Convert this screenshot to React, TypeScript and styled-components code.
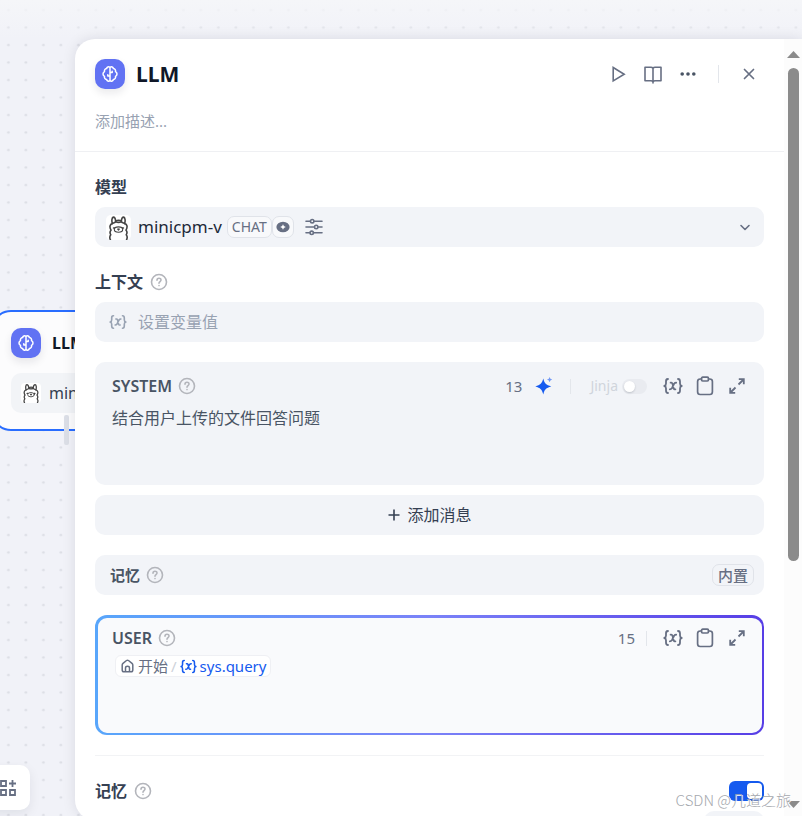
import React from "react";
import styled, { createGlobalStyle, css } from "styled-components";

const Global = createGlobalStyle`
  *, *::before, *::after { box-sizing: border-box; }
  body {
    margin: 0;
    overflow: hidden;
    font-family: "Noto Sans", "Noto Sans CJK SC", sans-serif;
    font-size: 16px;
    line-height: 24px;
    color: #354052;
  }
  button, input, textarea { font: inherit; color: inherit; }
  button { border: 0; padding: 0; background: none; cursor: pointer; }
  svg { display: block; flex: none; }
  h1, h2, h3, p { margin: 0; font: inherit; }
`;

const Shell = styled.div`
  position: relative;
  display: flex;
  height: 100vh;
  padding: 39px 0 0 75px;
  overflow: hidden;
  background-color: #f1f2f8;
`;

const Dots = styled.svg`
  position: absolute;
  inset: 0;
  width: 100%;
  height: 100%;
`;

const TopFade = styled.div`
  position: absolute;
  inset: 0 0 auto;
  height: 39px;
  background: linear-gradient(#f5f6f9, #f5f6f900);
`;

const NodeLayer = styled.div`
  position: absolute;
  left: 0;
  top: 0;
  bottom: 0;
  width: 75px;
  overflow: hidden;
`;

const Node = styled.article`
  position: absolute;
  left: -9px;
  top: 310px;
  width: 280px;
  height: 121px;
  padding: 16px 18px;
  border: 2px solid #296dff;
  border-radius: 20px;
  background: #fcfcfd;
`;

const NodeHead = styled.div`
  display: flex;
  align-items: center;
  gap: 11px;
  color: #101828;
  font-weight: 700;
`;

const NodeModel = styled.div`
  display: flex;
  align-items: center;
  gap: 8px;
  height: 40px;
  margin-top: 15px;
  padding: 0 10px;
  border-radius: 10px;
  background: #f2f4f7;
`;

const NodeHandle = styled.i`
  position: absolute;
  left: 64px;
  top: 415px;
  width: 5px;
  height: 30px;
  border-radius: 2px;
  background: #dcdfe7;
`;

const BlocksButton = styled.button`
  position: absolute;
  left: -15px;
  top: 765px;
  display: flex;
  align-items: center;
  justify-content: center;
  width: 45px;
  height: 45px;
  border-radius: 10px;
  background: #fff;
  color: #676f83;
  box-shadow: 0 4px 12px #10182814;
`;

const Panel = styled.section`
  position: relative;
  display: flex;
  flex: 1;
  min-width: 0;
  margin-bottom: -4px;
  overflow: hidden;
  border-radius: 20px 0 0 20px;
  background: #fff;
  box-shadow: 0 0 14px #1018281a;
`;

const PanelMain = styled.div`
  flex: 1;
  min-width: 0;
`;

const Header = styled.header`
  padding: 20px 20px 18px;
  border-bottom: 1px solid #eff0f3;
`;

const HeaderRow = styled.div`
  display: flex;
  align-items: center;
  height: 30px;
`;

const Title = styled.h1`
  flex: 1;
  margin-left: 11px;
  color: #101828;
  font-size: 21px;
  font-weight: 700;
`;

const BrainTile = styled.span`
  display: flex;
  align-items: center;
  justify-content: center;
  width: 30px;
  height: 30px;
  border-radius: 10px;
  background: #6172f3;
  color: #fff;
  box-shadow: 0 4px 8px #10182818;
`;

const Tools = styled.div<{ $gap: number }>`
  display: flex;
  align-items: center;
  gap: ${(p) => p.$gap}px;
`;

const CountGroup = styled(Tools)`
  margin-right: 16px;
`;

const CloseGroup = styled.div`
  display: flex;
  align-items: center;
  gap: 20px;
  margin: 0 5px;
`;

const JinjaGroup = styled.div`
  display: flex;
  align-items: center;
  gap: 19px;
  margin-left: 4px;
`;

const IconButton = styled.button`
  display: flex;
  align-items: center;
  justify-content: center;
  width: 20px;
  height: 24px;
  color: #676f83;
`;

const Rule = styled.i<{ $tall?: boolean }>`
  width: 1px;
  height: ${(p) => (p.$tall ? 18 : 15)}px;
  background: #e3e6eb;
`;

const Description = styled.input`
  display: block;
  width: 100%;
  height: 24px;
  margin-top: 20px;
  padding: 0;
  border: 0;
  outline: 0;
  background: none;
  font-size: 15px;
  &::placeholder { color: #98a2b2; opacity: 1; }
`;

const Body = styled.div`
  padding: 23px 20px 0;
`;

const Label = styled.h2`
  display: flex;
  align-items: center;
  gap: 7px;
  height: 24px;
  margin-bottom: 8px;
  color: #354052;
  font-weight: 600;
`;

const bar = css`
  display: flex;
  align-items: center;
  width: 100%;
  height: 40px;
  border-radius: 10px;
  background: #f2f4f8;
`;

const ModelSelect = styled.div`
  ${bar}
  margin-bottom: 23px;
  padding: 0 9px 0 11px;
`;

const ModelName = styled.span`
  margin: 0 5px 0 7px;
  color: #1d2939;
  font-size: 17px;
`;

const Badge = styled.span`
  display: flex;
  align-items: center;
  height: 22px;
  padding: 0 4px;
  border: 1px solid #e0e3e9;
  border-radius: 7px;
  background: #f8f9fb;
  color: #676f83;
  font-size: 14px;
`;

const Vision = styled(Badge)`
  margin-right: 10px;
  padding: 0 3px;
`;

const BuiltIn = styled(Badge)`
  padding: 0 5px;
  background: none;
  font-size: 15px;
  font-weight: 500;
`;

const Spacer = styled.span`
  flex: 1;
`;

const ContextPicker = styled.button`
  ${bar}
  gap: 11px;
  padding: 0 14px;
  color: #98a2b2;
`;

const Prompt = styled.section`
  height: 123px;
  margin: 20px 0 10px;
  padding: 12px 17px;
  border-radius: 10px;
  background: #f2f4f8;
`;

const UserPrompt = styled.section`
  height: 120px;
  margin: 20px 0;
  padding: 8px 15px 12px 14px;
  border: solid transparent;
  border-width: 3px 2px 2px 3px;
  border-radius: 12px;
  background:
    linear-gradient(#f9fafc, #f9fafc) padding-box,
    linear-gradient(90deg, #58a6fb, #7a82f8 50%, #573ee6) border-box;
`;

const PromptHead = styled.div`
  display: flex;
  align-items: center;
  height: 24px;
`;

const PromptTitle = styled.h3`
  display: flex;
  flex: 1;
  align-items: center;
  gap: 6px;
  color: #495464;
  font-size: 16px;
  font-weight: 600;
`;

const MemoryTitle = styled(PromptTitle)`
  font-size: 15px;
`;

const Count = styled.span`
  color: #676f83;
  font-size: 15px;
`;

const Jinja = styled.label`
  display: flex;
  align-items: center;
  gap: 4px;
  color: #d0d5dc;
  font-size: 14px;
`;

const Toggle = styled.input<{ $large?: boolean }>`
  appearance: none;
  display: flex;
  width: ${(p) => (p.$large ? 35 : 25)}px;
  height: ${(p) => (p.$large ? 20 : 15)}px;
  margin: 0;
  padding: 2px;
  border-radius: ${(p) => (p.$large ? 6 : 8)}px;
  background: #e9ebf0;
  cursor: pointer;
  &::before {
    content: "";
    width: ${(p) => (p.$large ? 15 : 11)}px;
    border-radius: ${(p) => (p.$large ? 4 : 6)}px;
    background: #fff;
    box-shadow: 0 1px 2px #10182830;
  }
  &:checked { justify-content: flex-end; background: #155aef; }
`;

const PromptText = styled.textarea`
  display: block;
  width: 100%;
  height: 72px;
  margin-top: 8px;
  padding: 0;
  border: 0;
  outline: 0;
  resize: none;
  background: none;
  color: #495464;
`;

const AddButton = styled.button`
  ${bar}
  justify-content: center;
  gap: 6px;
  color: #354052;
`;

const MemoryBar = styled.div`
  ${bar}
  margin-top: 20px;
  padding: 0 10px 0 15px;
`;

const VariableTag = styled.span`
  display: inline-flex;
  align-items: center;
  height: 22px;
  margin: 5px 0 0 3px;
  padding: 0 4px 0 5px;
  border: 1px solid #eff0f4;
  border-radius: 6px;
  background: #fff;
  color: #676f83;
  font-size: 15px;
`;

const StartName = styled.span`
  margin-left: 4px;
`;

const Slash = styled.span`
  margin: 0 3px;
  color: #cdd2da;
`;

const VariableName = styled.span`
  display: flex;
  align-items: center;
  gap: 3px;
  color: #155aef;
`;

const MemorySection = styled.div`
  display: flex;
  justify-content: space-between;
  padding-top: 23px;
  border-top: 1px solid #f2f3f5;
`;

const SwitchSlot = styled.div`
  display: flex;
  align-items: center;
  height: 24px;
`;

const WindowSize = styled.div`
  width: 60px;
  height: 30px;
  margin-left: auto;
  border-radius: 10px;
  background: #f2f4f8;
`;

const ScrollTrack = styled.div`
  display: flex;
  flex-direction: column;
  align-items: center;
  width: 18px;
  padding: 12px 0 12px;
  background: #fcfcfc;
  color: #8b8b8b;
`;

const ScrollThumb = styled.div`
  flex: 0 1 493px;
  width: 11px;
  margin: 10px 0 auto;
  border-radius: 6px;
  background: #8b8b8b;
`;

const Watermark = styled.span`
  position: absolute;
  right: 11px;
  bottom: 4px;
  color: #a5a8ae;
  font-size: 15px;
  font-weight: 300;
  font-family: "Noto Sans CJK SC", sans-serif;
  text-shadow: 1px 1px 0 #fff;
  white-space: pre;
`;

type IconProps = { size?: number };

const stroke = {
  fill: "none",
  stroke: "currentColor",
  strokeLinecap: "round",
  strokeLinejoin: "round",
} as const;

const Brain = () => (
  <svg width="18" height="18" viewBox="0 0 18 18" {...stroke} strokeWidth="1.5">
    <path d="M9 2.4C7.7 1.3 5.8 2 5.6 3.6C4 3.8 3.1 5.2 3.5 6.7C1.5 7.7 1.5 10.3 3.5 11.3C3.1 12.8 4 14.2 5.6 14.4C5.8 16 7.7 16.7 9 15.6M9 2.4C10.3 1.3 12.2 2 12.4 3.6C14 3.8 14.9 5.2 14.5 6.7C16.5 7.7 16.5 10.3 14.5 11.3C14.9 12.8 14 14.2 12.4 14.4C12.2 16 10.3 16.7 9 15.6M9 2.4V15.6M9 7.4H11.2V6.2M9 11H6.8V9.8" />
  </svg>
);

const Llama = ({ size = 25 }: IconProps) => (
  <svg width={size} height={size} viewBox="0 0 25 25" aria-hidden="true">
    <rect width="25" height="25" rx="5" fill="#fff" />
    <g {...stroke} stroke="#444" strokeWidth="1.6">
      <path d="M4.5 25C3.3 22.7 3.5 21.3 4.8 19.8C3.7 18 3.8 16.5 5 15.2C3.2 12 3.8 9.4 6.4 8.6C5.4 5.6 5.9 2.2 7.4 2.1C8.8 2.1 9.5 4 9.7 6.1C11.5 5 13.7 5 15.3 6.1C15.5 4 16.3 2.1 17.6 2.1C19.1 2.2 19.6 5.6 18.6 8.6C21.3 9.4 21.8 12 20 15.2C21.3 16.5 21.3 18 20.2 19.8C21.6 21.3 21.6 22.7 20.5 25" />
      <path d="M6.4 8.6C8 7.6 9 7.8 9.7 6.8C11.5 7.6 13.5 7.6 15.3 6.8C16 7.8 17 7.6 18.6 8.6M7.6 13H8.4M16.6 13H17.4M12 14.2L12.5 14.9L13 14.2" />
      <ellipse cx="12.5" cy="14.6" rx="4.2" ry="2.7" strokeWidth="1.1" />
    </g>
  </svg>
);

const Help = () => (
  <svg width="18" height="18" viewBox="0 0 18 18" {...stroke} stroke="#b3b5bb" strokeWidth="1.6">
    <circle cx="9" cy="9" r="7.5" />
    <path d="M7 7.2C7 4.6 11 4.7 11 7C11 8.5 9 8.6 9 10.2M9 12.5V12.6" />
  </svg>
);

const Variable = ({ size = 20 }: IconProps) => (
  <svg width={size} height={size} viewBox="0 0 20 20" {...stroke} strokeWidth="1.8">
    <path d="M5 3C3 3 3 4 3 5.5V7.5C3 9 2.4 9.8 1.3 10C2.4 10.2 3 11 3 12.5V14.5C3 16 3 17 5 17M15 3C17 3 17 4 17 5.5V7.5C17 9 17.6 9.8 18.7 10C17.6 10.2 17 11 17 12.5V14.5C17 16 17 17 15 17" />
    <path d="M7.6 6.7H8.3C9 6.7 9.2 7 9.4 7.6L10.7 12.4C10.9 13 11.1 13.3 11.8 13.3H12.4M13.2 6.7C12.2 6.7 11.7 7 11.1 7.8L8.9 12.2C8.3 13 7.8 13.3 6.8 13.3" />
  </svg>
);

const Clipboard = () => (
  <svg width="20" height="20" viewBox="0 0 20 20" {...stroke} strokeWidth="1.7">
    <path d="M6.5 3H5.2C3.5 3 2.6 4 2.6 5.5V15.8C2.6 17.5 3.5 18.5 5.2 18.5H14.8C16.5 18.5 17.4 17.5 17.4 15.8V5.5C17.4 4 16.5 3 14.8 3H13.5" />
    <rect x="6.5" y="1.2" width="7" height="3.8" rx="1.2" />
  </svg>
);

const Expand = () => (
  <svg width="20" height="20" viewBox="0 0 20 20" {...stroke} strokeWidth="1.8" strokeLinecap="butt" strokeLinejoin="miter">
    <path d="M11.8 3.2H16.8V8.2M16.5 3.5L11.5 8.5M8.2 16.8H3.2V11.8M3.5 16.5L8.5 11.5" />
  </svg>
);

const Sparkle = () => (
  <svg width="18" height="18" viewBox="0 0 18 18">
    <path d="M8.3 1.6C9.6 6.7 10.8 7.9 16.3 9.5C10.8 11.1 9.6 12.3 8.3 17.4C6.8 12.3 5.6 11.1 0.3 9.5C5.6 7.9 6.8 6.7 8.3 1.6Z" fill="#155aef" />
    <path d="M14.6 0L15.4 1.8L17.2 2.6L15.4 3.4L14.6 5.2L13.8 3.4L12 2.6L13.8 1.8Z" fill="#7399f5" />
  </svg>
);

const Eye = () => (
  <svg width="14" height="12" viewBox="0 0 14 12">
    <ellipse cx="7" cy="6" rx="6.6" ry="5.2" fill="#676f83" />
    <path d="M7 3.2L7.9 5.1L9.8 6L7.9 6.9L7 8.8L6.1 6.9L4.2 6L6.1 5.1Z" fill="#fff" />
  </svg>
);

const Sliders = () => (
  <svg width="20" height="20" viewBox="0 0 20 20" {...stroke} strokeWidth="1.6">
    <path d="M2 4.2H6M10.5 4.2H18M2 10H9.5M14.5 10H18M2 15.8H5.5M10 15.8H18" />
    <circle cx="8.2" cy="4.2" r="1.7" />
    <circle cx="12.2" cy="10" r="1.7" />
    <circle cx="7.7" cy="15.8" r="1.7" />
  </svg>
);

const Home = () => (
  <svg width="13" height="14" viewBox="0 0 13 14" {...stroke} strokeWidth="1.5">
    <path d="M1.2 6C1.2 5.3 1.4 4.9 2 4.4L5.5 1.5C6.2 1 6.8 1 7.5 1.5L11 4.4C11.6 4.9 11.8 5.3 11.8 6V11C11.8 12.3 11.2 12.8 10 12.8H3C1.8 12.8 1.2 12.3 1.2 11ZM4.5 12.5V9C4.5 6.7 8.5 6.7 8.5 9V12.5" />
  </svg>
);

const Arrow = ({ down }: { down?: boolean }) => (
  <svg width="13" height="7" viewBox="0 0 13 7">
    <path d={down ? "M0 0H13L6.5 7Z" : "M0 7H13L6.5 0Z"} fill="currentColor" />
  </svg>
);

const EditTools = () => (
  <Tools $gap={12}>
    <IconButton aria-label="插入变量"><Variable /></IconButton>
    <IconButton aria-label="复制"><Clipboard /></IconButton>
    <IconButton aria-label="展开"><Expand /></IconButton>
  </Tools>
);

export default function App() {
  return (
    <>
      <Global />
      <Shell>
        <Dots aria-hidden="true">
          <defs>
            <pattern id="dots" x="-1" y="1" width="17.5" height="17.5" patternUnits="userSpaceOnUse">
              <circle cx="9.4" cy="9" r="1.3" fill="#dcdee5" />
            </pattern>
          </defs>
          <rect width="100%" height="100%" fill="url(#dots)" />
        </Dots>
        <TopFade />
        <NodeLayer>
          <Node>
            <NodeHead>
              <BrainTile><Brain /></BrainTile>
              LLM
            </NodeHead>
            <NodeModel>
              <Llama size={20} />
              minicpm-v
            </NodeModel>
          </Node>
          <NodeHandle />
        </NodeLayer>
        <BlocksButton aria-label="添加节点">
          <svg width="18" height="18" viewBox="0 0 18 18" fill="none" stroke="currentColor" strokeWidth="1.8">
            <path d="M2 2H7V7H2ZM2 11H7V16H2ZM11 11H16V16H11ZM13.5 1V8M10 4.5H17" />
          </svg>
        </BlocksButton>

        <Panel>
          <PanelMain>
            <Header>
              <HeaderRow>
                <BrainTile><Brain /></BrainTile>
                <Title>LLM</Title>
                <Tools $gap={15}>
                  <IconButton aria-label="运行">
                    <svg width="20" height="20" viewBox="0 0 20 20" {...stroke} strokeWidth="1.6" strokeLinejoin="miter">
                      <path d="M5.2 3.5V16.9L16.2 10.2Z" />
                    </svg>
                  </IconButton>
                  <IconButton aria-label="文档">
                    <svg width="20" height="20" viewBox="0 0 20 20" {...stroke} strokeWidth="1.6">
                      <path d="M10 4.3V19M10 4.3C9.5 3.5 9 3.2 8 3.2H2V16.8H8C9 16.8 9.5 17 10 17.5C10.5 17 11 16.8 12 16.8H18V3.2H12C11 3.2 10.5 3.5 10 4.3" />
                    </svg>
                  </IconButton>
                  <IconButton aria-label="更多">
                    <svg width="16" height="16" viewBox="0 0 16 16" fill="#495464">
                      <circle cx="2.2" cy="8" r="1.8" />
                      <circle cx="8" cy="8" r="1.8" />
                      <circle cx="13.8" cy="8" r="1.8" />
                    </svg>
                  </IconButton>
                  <CloseGroup>
                    <Rule $tall />
                    <IconButton aria-label="关闭">
                      <svg width="12" height="12" viewBox="0 0 12 12" {...stroke} strokeWidth="1.7">
                        <path d="M1.5 1.5L10.5 10.5M10.5 1.5L1.5 10.5" />
                      </svg>
                    </IconButton>
                  </CloseGroup>
                </Tools>
              </HeaderRow>
              <Description aria-label="描述" placeholder="添加描述..." />
            </Header>

            <Body>
              <Label>模型</Label>
              <ModelSelect>
                <Llama />
                <ModelName>minicpm-v</ModelName>
                <Badge>CHAT</Badge>
                <Vision><Eye /></Vision>
                <IconButton aria-label="模型参数"><Sliders /></IconButton>
                <Spacer />
                <IconButton aria-label="选择模型">
                  <svg width="12" height="12" viewBox="0 0 12 12" {...stroke} strokeWidth="1.6">
                    <path d="M2 4.5L6 8.5L10 4.5" />
                  </svg>
                </IconButton>
              </ModelSelect>

              <Label>上下文 <Help /></Label>
              <ContextPicker><Variable size={18} />设置变量值</ContextPicker>

              <Prompt>
                <PromptHead>
                  <PromptTitle>SYSTEM <Help /></PromptTitle>
                  <CountGroup $gap={12}>
                    <Count>13</Count>
                    <IconButton aria-label="生成提示词"><Sparkle /></IconButton>
                    <JinjaGroup>
                      <Rule />
                      <Jinja>Jinja <Toggle type="checkbox" role="switch" /></Jinja>
                    </JinjaGroup>
                  </CountGroup>
                  <EditTools />
                </PromptHead>
                <PromptText aria-label="SYSTEM" defaultValue="结合用户上传的文件回答问题" />
              </Prompt>

              <AddButton>
                <svg width="14" height="14" viewBox="0 0 14 14" {...stroke} strokeWidth="1.6" strokeLinecap="butt">
                  <path d="M7 1.5V12.5M1.5 7H12.5" />
                </svg>
                添加消息
              </AddButton>

              <MemoryBar>
                <MemoryTitle>记忆 <Help /></MemoryTitle>
                <BuiltIn>内置</BuiltIn>
              </MemoryBar>

              <UserPrompt>
                <PromptHead>
                  <PromptTitle>USER <Help /></PromptTitle>
                  <CountGroup $gap={11}>
                    <Count>15</Count>
                    <Rule />
                  </CountGroup>
                  <EditTools />
                </PromptHead>
                <VariableTag>
                  <Home />
                  <StartName>开始</StartName>
                  <Slash>/</Slash>
                  <VariableName><Variable size={17} />sys.query</VariableName>
                </VariableTag>
              </UserPrompt>

              <MemorySection>
                <Label>记忆 <Help /></Label>
                <SwitchSlot>
                  <Toggle $large type="checkbox" role="switch" aria-label="记忆" defaultChecked />
                </SwitchSlot>
              </MemorySection>
              <WindowSize />
            </Body>
          </PanelMain>
          <ScrollTrack aria-hidden="true">
            <Arrow />
            <ScrollThumb />
            <Arrow down />
          </ScrollTrack>
        </Panel>
        <Watermark>CSDN @几道之旅</Watermark>
      </Shell>
    </>
  );
}
